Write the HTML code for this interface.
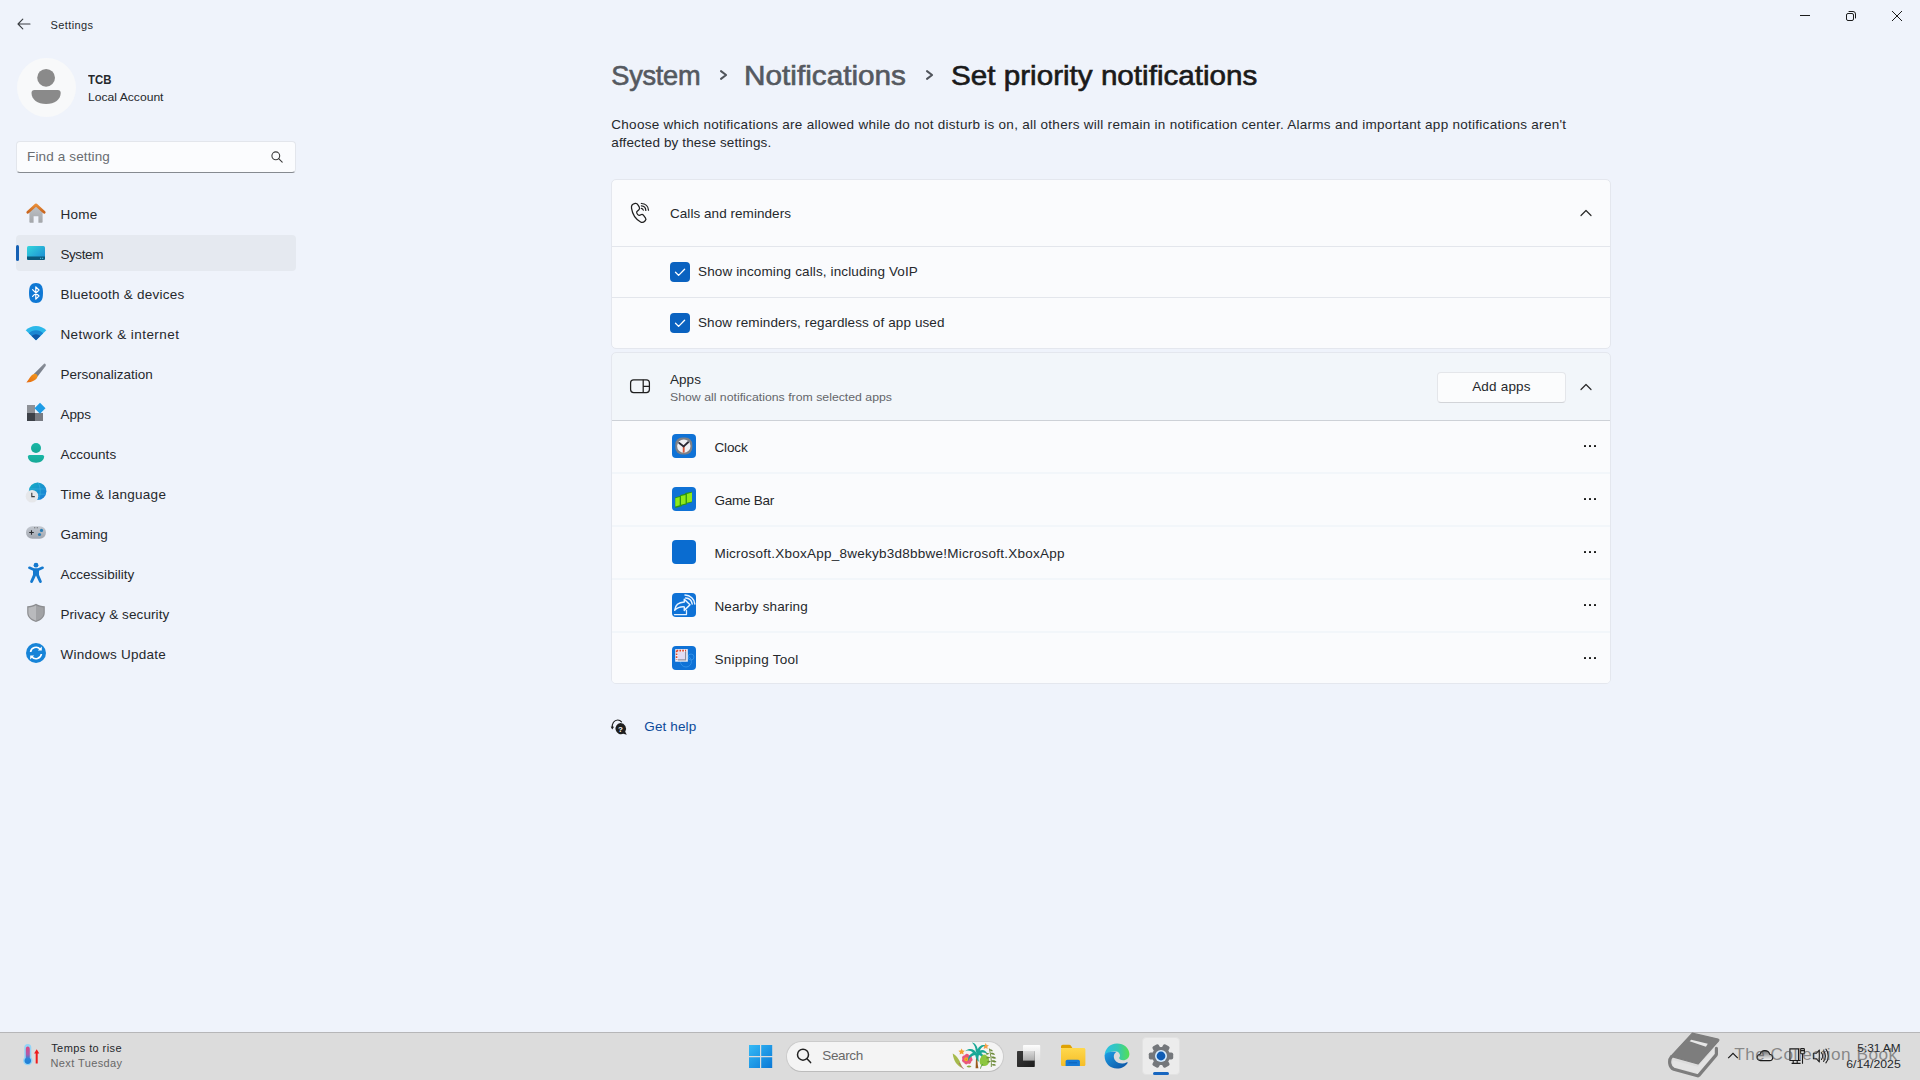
<!DOCTYPE html>
<html lang="en"><head><meta charset="utf-8"><title>Settings</title>
<style>
*{box-sizing:border-box;margin:0;padding:0}
html,body{width:1920px;height:1080px;overflow:hidden}
body{background:#eff3fb;font-family:"Liberation Sans",sans-serif;color:#1f2226;position:relative;font-size:14px}
.abs,svg{position:absolute}
.t{position:absolute;white-space:pre;line-height:1}
.card{position:absolute;left:611px;width:1000px;background:#fafbfd;border:1px solid #e4e7ee}
.row{position:absolute;left:612px;width:998px;height:51px;background:#fafbfd}
.dots{position:absolute;left:1582px;width:15px;height:3px}
.dots i{position:absolute;top:0;width:2.2px;height:2.2px;border-radius:.4px;background:#0a0a0a}
.aicon{position:absolute;left:672px;width:24px;height:24px;border-radius:4px;background:#0a6cce;overflow:hidden}
</style></head><body>
<!-- window chrome -->
<svg style="left:16px;top:16px" width="16" height="16" viewBox="0 0 16 16" fill="none" stroke="#3a3d42" stroke-width="1.1" stroke-linecap="round" stroke-linejoin="round"><path d="M14 8H2.2M6.8 3.2 2 8l4.8 4.8"/></svg>
<svg style="left:1799px;top:10px" width="12" height="12" viewBox="0 0 12 12" stroke="#1b1b1b" stroke-width="1" fill="none"><path d="M1 5.5h10"/></svg>
<svg style="left:1845px;top:10px" width="12" height="12" viewBox="0 0 12 12" stroke="#1b1b1b" stroke-width="1" fill="none"><rect x="1.5" y="3.5" width="7" height="7" rx="1.5"/><path d="M3.6 1.5H8a2.5 2.5 0 0 1 2.5 2.5v4.4"/></svg>
<svg style="left:1891px;top:10px" width="12" height="12" viewBox="0 0 12 12" stroke="#1b1b1b" stroke-width="1" fill="none"><path d="M1 1l10 10M11 1 1 11"/></svg>
<!-- avatar -->
<div class="abs" style="left:16.5px;top:58px;width:59px;height:59px;border-radius:50%;background:#f8f9fa"></div>
<svg style="left:16px;top:58px" width="60" height="60" viewBox="0 0 60 60"><circle cx="30.1" cy="19.8" r="8.9" fill="#8a8a8a"/><path d="M18.5 32h23.2a3 3 0 0 1 3 3c0 6.5-6 11-14.6 11S15.5 41.500 15.500 35a3 3 0 0 1 3-3z" fill="#8a8a8a"/></svg>
<!-- search box -->
<div class="abs" style="left:16px;top:141px;width:280px;height:32px;border-radius:4px;background:#fbfcfe;border:1px solid #e3e6ec;border-bottom:1.5px solid #868a90"></div>
<svg style="left:270px;top:150px" width="14" height="14" viewBox="0 0 14 14" fill="none" stroke="#3c3c3c" stroke-width="1.1" stroke-linecap="round"><circle cx="5.8" cy="5.8" r="3.9"/><path d="M8.7 8.7 12.2 12.200"/></svg>
<!-- selected nav -->
<div class="abs" style="left:16px;top:235px;width:280px;height:36px;border-radius:4px;background:#e5e9f0"></div>
<div class="abs" style="left:16px;top:245px;width:3px;height:16px;border-radius:1.5px;background:#1560b4"></div>
<!-- home -->
<svg style="left:25px;top:202px" width="22" height="22" viewBox="0 0 22 22"><defs><linearGradient id="hg" x1="0" y1="0" x2="0" y2="1"><stop offset="0" stop-color="#bfc2c6"/><stop offset="1" stop-color="#a3a6aa"/></linearGradient><linearGradient id="hr" x1="0" y1="0" x2="0" y2="1"><stop offset="0" stop-color="#e88d38"/><stop offset="1" stop-color="#c9651e"/></linearGradient></defs><path d="M4.400 9.600 11 4l6.600 5.600V20a.8.800 0 0 1-.8.800h-3.400v-6.600H8.600v6.600H5.200a.8.800 0 0 1-.8-.8z" fill="url(#hg)"/><path d="M2.800 10.200 11 2.900l8.200 7.300" fill="none" stroke="url(#hr)" stroke-width="2.800" stroke-linecap="round" stroke-linejoin="round"/></svg>
<!-- system -->
<svg style="left:26px;top:245px" width="20" height="16" viewBox="0 0 20 16"><defs><linearGradient id="sg" x1="0" y1="0" x2="1" y2="1"><stop offset="0" stop-color="#33d6dc"/><stop offset="1" stop-color="#1b86d2"/></linearGradient></defs><rect x="1" y="1" width="18" height="14" rx="1.600" fill="url(#sg)"/><path d="M1 11.400h18v2a1.600 1.600 0 0 1-1.600 1.600H2.600A1.600 1.600 0 0 1 1 13.400z" fill="#0b5a7c"/><rect x="14" y="12.800" width="1.200" height="1" fill="#4fc3e8"/><rect x="16" y="12.800" width="1.200" height="1" fill="#4fc3e8"/></svg>
<!-- bluetooth -->
<svg style="left:25px;top:282px" width="22" height="22" viewBox="0 0 22 22"><path d="M11 1c4.600 0 7 2.600 7 10s-2.400 10-7 10-7-2.600-7-10 2.400-10 7-10z" fill="#0f78d4"/><path d="M7.600 7.600 14 14l-3.200 3.200V4.800L14 8l-6.400 6.400" fill="none" stroke="#fff" stroke-width="1.200" stroke-linejoin="round" stroke-linecap="round"/></svg>
<!-- network -->
<svg style="left:25px;top:322px" width="22" height="22" viewBox="0 0 22 22"><path d="M11 18.200 0.700 8.300C3.300 5.600 7 4 11 4s7.700 1.600 10.300 4.300z" fill="#2cb8ea"/><path d="M11 18.200 3.800 11.300C5.700 9.400 8.200 8.200 11 8.200s5.300 1.200 7.200 3.100z" fill="#1a86d2"/><path d="M11 18.200 6.700 14.100c1.100-1.100 2.600-1.800 4.300-1.800s3.200.7 4.300 1.800z" fill="#1059a8"/></svg>
<!-- personalization -->
<svg style="left:25px;top:362px" width="22" height="22" viewBox="0 0 22 22"><defs><linearGradient id="pb" x1="1" y1="0" x2="0" y2="1"><stop offset="0" stop-color="#8a8f98"/><stop offset="1" stop-color="#6f7682"/></linearGradient><linearGradient id="po" x1="1" y1="0" x2="0" y2="1"><stop offset="0" stop-color="#f29a1f"/><stop offset="1" stop-color="#e56a10"/></linearGradient></defs><path d="M19.300 1.600a1.500 1.500 0 0 1 1.300 2.300L12.400 14.700 8.800 12z" fill="url(#pb)"/><path d="M8.800 12c2-1 4.400.8 3.600 2.900-1 2.600-4.200 5.200-11 5.500C3.500 18.500 4.800 13.800 8.800 12z" fill="url(#po)"/></svg>
<!-- apps -->
<svg style="left:25px;top:402px" width="22" height="22" viewBox="0 0 22 22"><rect x="2" y="3" width="8" height="8" fill="#8e9197"/><rect x="2" y="11" width="8" height="8" fill="#3d4148"/><rect x="10" y="11" width="8" height="8" fill="#787b82"/><path d="M15 0.800 20.500 6.300 15 11.800 9.500 6.300z" fill="#1d9ce6"/></svg>
<!-- accounts -->
<svg style="left:25px;top:442px" width="22" height="22" viewBox="0 0 22 22"><defs><linearGradient id="ag" x1="0" y1="0" x2="0" y2="1"><stop offset="0" stop-color="#19b7a6"/><stop offset="1" stop-color="#16a896"/></linearGradient></defs><circle cx="11" cy="6" r="5" fill="url(#ag)"/><path d="M4.500 13h13a1.600 1.600 0 0 1 1.600 1.600c0 3.600-3.200 6.200-8.100 6.200s-8.100-2.600-8.100-6.200A1.600 1.600 0 0 1 4.500 13z" fill="url(#ag)"/></svg>
<!-- time & language -->
<svg style="left:25px;top:482px" width="22" height="22" viewBox="0 0 22 22"><defs><linearGradient id="tg" x1="0" y1="0" x2="1" y2="1"><stop offset="0" stop-color="#16b0c4"/><stop offset="1" stop-color="#1b78d8"/></linearGradient></defs><circle cx="12.600" cy="9.300" r="8.800" fill="url(#tg)"/><path d="M12.600 .5c3.500 2.500 3.500 15 0 17.600M4 7h17.200M5 12.200h16" stroke="#4fc4ea" stroke-width=".6" fill="none" opacity=".7"/><circle cx="7" cy="14.200" r="6.300" fill="#e6e7ea"/><path d="M6.800 10.800v3.800h3" fill="none" stroke="#3a3a3c" stroke-width="1.100"/></svg>
<!-- gaming -->
<svg style="left:25px;top:522px" width="22" height="22" viewBox="0 0 22 22"><defs><linearGradient id="gg" x1="0" y1="0" x2="0" y2="1"><stop offset="0" stop-color="#c3c8d0"/><stop offset="1" stop-color="#a2a7b0"/></linearGradient></defs><rect x="1" y="4.300" width="20" height="12.400" rx="6.200" fill="url(#gg)"/><path d="M4.200 10.500h4.600M6.500 8.200v4.600" stroke="#2a2c30" stroke-width="1.100"/><circle cx="16.500" cy="8.400" r="1.600" fill="#2b7db4"/><circle cx="14.500" cy="12.500" r="1.600" fill="#2b7db4"/><circle cx="9.800" cy="5.700" r=".5" fill="#333"/><circle cx="12.200" cy="5.700" r=".5" fill="#333"/></svg>
<!-- accessibility -->
<svg style="left:25px;top:562px" width="22" height="22" viewBox="0 0 22 22"><circle cx="11" cy="3.200" r="2.400" fill="#1479cf"/><path d="M3.200 5.300c.3-.8 1-1 1.800-.7L9 6.200h4l4-1.600c.8-.3 1.500-.1 1.800.7.300.8-.1 1.400-.9 1.700L14 8.700v4.100l2.700 6.300c.3.800 0 1.500-.7 1.800-.8.300-1.500 0-1.800-.7L11 13.600l-3.200 6.600c-.3.700-1 1-1.800.7-.7-.3-1-1-.7-1.800L8 12.800V8.700L4.100 7c-.8-.3-1.200-.9-.9-1.700z" fill="#1479cf"/></svg>
<!-- privacy -->
<svg style="left:25px;top:602px" width="22" height="22" viewBox="0 0 22 22"><path d="M11 1.800c2.600 1.700 5.400 2.400 8.800 2.500v6.200c0 4.600-3.400 7.800-8.800 9.500-5.400-1.700-8.800-4.900-8.800-9.500V4.300C5.600 4.200 8.400 3.500 11 1.800z" fill="#8c8d90"/><path d="M11 3.200c2.300 1.400 4.700 2 7.600 2.200v5.100c0 3.900-2.900 6.700-7.600 8.200z" fill="#a1a2a5"/><path d="M11 3.200C8.700 4.600 6.300 5.200 3.400 5.400v5.100c0 3.900 2.900 6.700 7.600 8.200z" fill="#b9babd"/></svg>
<!-- windows update -->
<svg style="left:25px;top:642px" width="22" height="22" viewBox="0 0 22 22"><circle cx="11" cy="11" r="10" fill="#1784d8"/><path d="M5.600 10a5.500 5.500 0 0 1 9.600-2.800M16.400 12a5.500 5.500 0 0 1-9.600 2.800" fill="none" stroke="#fff" stroke-width="1.700"/><path d="M16.800 4.600v4h-4zM5.200 17.400v-4h4z" fill="#fff"/></svg>


<!-- breadcrumb chevrons -->
<svg style="left:717px;top:67px" width="14" height="16" viewBox="0 0 14 16" fill="none" stroke="#50545b" stroke-width="2" stroke-linecap="round" stroke-linejoin="round"><path d="M4 4.100 9.100 8 4 11.900"/></svg>
<svg style="left:923px;top:67px" width="14" height="16" viewBox="0 0 14 16" fill="none" stroke="#50545b" stroke-width="2" stroke-linecap="round" stroke-linejoin="round"><path d="M4 4.100 9.100 8 4 11.900"/></svg>
<!-- card 1 -->
<div class="card" style="top:179px;height:170px;border-radius:5px"></div>
<div class="abs" style="left:612px;top:246px;width:998px;height:1px;background:#e3e6ec"></div>
<div class="abs" style="left:612px;top:297px;width:998px;height:1px;background:#e3e6ec"></div>
<!-- card 2 -->
<div class="card" style="top:352px;height:332px;border-radius:5px;background:#f2f6fa"></div>
<div class="abs" style="left:612px;top:420px;width:998px;height:1px;background:#cdd1d7"></div>
<div class="row" style="top:421px"></div>
<div class="row" style="top:474px"></div>
<div class="row" style="top:527px"></div>
<div class="row" style="top:580px"></div>
<div class="row" style="top:633px;height:50px;border-radius:0 0 4px 4px"></div>
<!-- checkboxes -->
<div class="abs" style="left:670px;top:262px;width:20px;height:20px;border-radius:4px;background:#0a62c0"></div>
<svg style="left:670px;top:262px" width="20" height="20" viewBox="0 0 20 20" fill="none" stroke="#fff" stroke-width="1.3" stroke-linecap="round" stroke-linejoin="round"><path d="M5.500 10.300 8.600 13.400 14.600 7.200"/></svg>
<div class="abs" style="left:670px;top:313px;width:20px;height:20px;border-radius:4px;background:#0a62c0"></div>
<svg style="left:670px;top:313px" width="20" height="20" viewBox="0 0 20 20" fill="none" stroke="#fff" stroke-width="1.3" stroke-linecap="round" stroke-linejoin="round"><path d="M5.500 10.300 8.600 13.400 14.600 7.200"/></svg>
<!-- header chevrons -->
<svg style="left:1579px;top:207px" width="14" height="12" viewBox="0 0 14 12" fill="none" stroke="#2a2a2a" stroke-width="1.2" stroke-linecap="round" stroke-linejoin="round"><path d="M2 8.500 7 3.500 12 8.500"/></svg>
<svg style="left:1579px;top:381px" width="14" height="12" viewBox="0 0 14 12" fill="none" stroke="#2a2a2a" stroke-width="1.2" stroke-linecap="round" stroke-linejoin="round"><path d="M2 8.500 7 3.500 12 8.500"/></svg>
<!-- add apps button -->
<div class="abs" style="left:1437px;top:372px;width:129px;height:31px;border-radius:4px;background:#fbfcfd;border:1px solid #e4e6ea;border-bottom-color:#d2d4d8"></div>
<!-- dots -->
<div class="dots" style="top:445px"><i style="left:1.900px"></i><i style="left:6.900px"></i><i style="left:11.900px"></i></div>
<div class="dots" style="top:498px"><i style="left:1.900px"></i><i style="left:6.900px"></i><i style="left:11.900px"></i></div>
<div class="dots" style="top:551px"><i style="left:1.900px"></i><i style="left:6.900px"></i><i style="left:11.900px"></i></div>
<div class="dots" style="top:604px"><i style="left:1.900px"></i><i style="left:6.900px"></i><i style="left:11.900px"></i></div>
<div class="dots" style="top:657px"><i style="left:1.900px"></i><i style="left:6.900px"></i><i style="left:11.900px"></i></div>
<!-- calls icon -->
<svg style="left:620px;top:195px" width="40" height="40" viewBox="0 0 40 40" fill="none" stroke="#1f1f1f" stroke-width="1.250" stroke-linecap="round" stroke-linejoin="round"><path d="M15.200 8.400c1.300-.2 2.200.5 2.900 1.700l1.200 2c.6 1.100.3 2.100-.6 2.900l-1.500 1.300c-.6.500-.7 1-.4 1.800.5 1.300 1.100 2 2.200 2.200.6.100 1.200-.1 1.900-.5.900-.5 1.800-.4 2.500.4l2 2.600c.8 1 .7 2-.200 2.900-1.500 1.600-3 2.200-4.600 1.300-4.900-2.800-8.200-7.800-9.100-13.900-.3-2.300 1.200-4.300 3.700-4.700z"/><path d="M21.400 8.500c4 .2 6.900 2.900 7.100 6.700M21.400 10.900c2.600.2 4.300 1.900 4.400 4.500M21.400 13.400c1 .2 1.600.8 1.900 1.700"/></svg>
<!-- apps header icon -->
<svg style="left:620px;top:367px" width="40" height="40" viewBox="0 0 40 40" fill="none" stroke="#1f1f1f" stroke-width="1.250"><rect x="10.600" y="12.800" width="18.800" height="12.700" rx="3"/><path d="M23.200 12.800v12.700M23.200 19.300h6.200"/></svg>
<!-- clock -->
<div class="aicon" style="top:434px;background:#0f72d6"><svg width="24" height="24" viewBox="0 0 24 24"><rect x="3.300" y="3.600" width="17" height="17" rx="6.800" fill="#7d8087"/><circle cx="11.800" cy="12.100" r="6.700" fill="#f0f0f3"/><path d="M11.700 12.400v5.400" stroke="#d9573a" stroke-width="1.900" stroke-linecap="round"/><path d="M7.200 8.900l4.500 3.500 4.400-4.200" fill="none" stroke="#2c2a35" stroke-width="1.900" stroke-linecap="round" stroke-linejoin="round"/></svg></div>
<!-- game bar -->
<div class="aicon" style="top:487px;background:#0f72d6"><svg width="24" height="24" viewBox="0 0 24 24"><path d="M3.300 10.200 8.200 8.900V8l5-1.300V5.900L20 4.700v10.500l-5.300 1.400v.8l-4.900 1.200v.7l-6.500 1.600z" fill="#2c9413"/><path d="M3.300 11.300 7.700 10.100v8.200l-4.400 1.200zM9 9.100l4.600-1.200v8.600L9 17.700zM14.900 6.900l5.100-1.300v8.800l-5.100 1.300z" fill="#8fe91a"/></svg></div>
<!-- xbox placeholder -->
<div class="aicon" style="top:540px;background:#0a6cd0"></div>
<!-- nearby sharing -->
<div class="aicon" style="top:593px;background:#0f72d6"><svg width="24" height="24" viewBox="0 0 24 24" fill="none" stroke="#e6f2ff" stroke-width="1.500" stroke-linejoin="round" stroke-linecap="round"><path d="M12.300 6.200l5.700 5.600-5.700 5.600v-3.500c-4-.3-7 .8-9.600 3.300.5-5 3.800-7.900 9.600-8.200z"/><path d="M2.500 21.600h12V17.300" stroke-width="1.300"/><path d="M13 2.100c5.300.2 9.500 3.900 9.800 8.900M13.600 5c3.700.3 6.200 2.600 6.600 6"/></svg></div>
<!-- snipping tool -->
<div class="aicon" style="top:646px;background:#0f72d6"><svg width="24" height="24" viewBox="0 0 24 24"><circle cx="14" cy="15.500" r="5.500" fill="none" stroke="#2f8fe6" stroke-width="1"/><circle cx="19" cy="11" r="3" fill="none" stroke="#2f8fe6" stroke-width="1"/><rect x="3.200" y="3.100" width="12.600" height="12.600" fill="#f4f1f7"/><rect x="6" y="6" width="7.500" height="7.500" fill="#e3dcf3"/><path d="M4.600 4.600h9.500M4.600 4.600v9" stroke="#e0452a" stroke-width="1.600" stroke-dasharray="1.700 1.100" fill="none"/><path d="M13.600 5.500v8.300H5.800" stroke="#8d8fa0" stroke-width="1.200" fill="none"/></svg></div>
<!-- get help icon -->
<svg style="left:608px;top:716px" width="24" height="24" viewBox="0 0 24 24"><path d="M4.400 11.600C3.700 7.500 6.200 4 9.700 4c1.600 0 2.900.7 3.800 1.800" fill="none" stroke="#1f1f1f" stroke-width="1.200" stroke-linecap="round"/><path d="M2.700 10.500l3.400.3-1.900 2.700z" fill="#1f1f1f"/><path d="M12.400 7.100a5.600 5.600 0 0 1 4.800 8.600l1.600 3.100-3.500-1A5.600 5.600 0 1 1 12.400 7.100z" fill="#1f1f1f"/><text x="12.400" y="15.600" text-anchor="middle" font-family="Liberation Sans, sans-serif" font-size="8" font-weight="700" fill="#fff">?</text></svg>


<div class="abs" style="left:0;top:1032px;width:1920px;height:48px;background:#dcdcdc;border-top:1px solid #b6b6b8"></div>
<!-- search pill -->
<div class="abs" style="left:785.500px;top:1040.500px;width:218.500px;height:31px;border-radius:15.500px;background:#f4f4f4;border:1px solid #cbcbcb;border-bottom-color:#bcbcbc"></div>
<!-- settings active bg -->
<div class="abs" style="left:1142px;top:1037px;width:38px;height:38px;border-radius:4px;background:#ececec;border:1px solid #e2e2e2"></div>
<div class="abs" style="left:1153px;top:1072px;width:16px;height:3px;border-radius:1.5px;background:#1766c0"></div>
<!-- weather thermometer -->
<svg style="left:20px;top:1042px" width="24" height="26" viewBox="0 0 24 26"><defs><linearGradient id="th" x1="0" y1="0" x2="0" y2="1"><stop offset="0" stop-color="#e0457c"/><stop offset=".45" stop-color="#b05aa8"/><stop offset=".7" stop-color="#2a86d8"/><stop offset="1" stop-color="#1e7fd6"/></linearGradient></defs><path d="M7.800 2a3.500 3.500 0 0 1 3.500 3.500v9.900a4.700 4.700 0 1 1-7 0V5.500A3.500 3.500 0 0 1 7.800 2z" fill="#93d4f7"/><path d="M7.800 4.400c1.300 0 2 1.300 2 2.800v8.900a3.300 3.300 0 1 1-4 0V7.200c0-1.500.7-2.800 2-2.800z" fill="url(#th)"/><path d="M16.700 7.200 19.300 11.500h-1.600V21.500h-2V11.500h-1.600z" fill="#ee1c1c"/></svg>
<!-- start -->
<svg style="left:748px;top:1044px" width="26" height="26" viewBox="0 0 26 26"><defs><linearGradient id="wl" x1="0" y1="0" x2="1" y2="1"><stop offset="0" stop-color="#35baf6"/><stop offset="1" stop-color="#0a78d6"/></linearGradient></defs><path d="M1 1.100h11v11H1zM13.200 1.100h11v11h-11zM1 13.300h11v10.700H1zM13.200 13.300h11v10.700h-11z" fill="url(#wl)"/></svg>
<!-- search glass -->
<svg style="left:794px;top:1046px" width="20" height="20" viewBox="0 0 20 20" fill="none" stroke="#222" stroke-width="1.500" stroke-linecap="round"><circle cx="9" cy="8.700" r="5.500"/><path d="M13 12.800 16.600 16.600"/></svg>
<!-- floral -->
<svg style="left:950px;top:1042px" width="52" height="28" viewBox="0 0 52 28">
<path d="M2.700 11.500c4.500 2.500 7.500 7 9.300 14.500-5-2.500-8.500-7-9.300-14.500z" fill="#a6ba4c"/><path d="M9 21l4.500 6" stroke="#b0566a" stroke-width=".8"/>
<path d="M11.600 6.500l1 2 2.200.3-1.600 1.500.4 2.200-2-1-2 1 .4-2.200-1.600-1.500 2.200-.3z" fill="#f0a22e"/>
<path d="M35.700 1l1 2 2.200.3-1.600 1.500.4 2.200-2-1-2 1 .4-2.200-1.600-1.500 2.200-.3z" fill="#f4a04a"/>
<path d="M15.800 12.200c1.500-1 3 .2 3.200 1.300 1.500-.6 3.300.5 2.800 2.400 1.300 1 1 3-.6 3.700.2 1.800-1.600 2.900-3.200 2-1.200 1.400-3.300.8-3.800-.9-1.800-.2-2.800-2.100-1.800-3.700-1-1.600.2-3.600 1.900-3.500.3-.5.900-1 1.500-1.300z" fill="#e9577c"/><circle cx="16.200" cy="17.300" r="2" fill="#f2b022"/><circle cx="16.200" cy="17.300" r=".8" fill="#e08a1a"/>
<path d="M16.500 24.500c1.500-1.500 3.500-1.500 5 0-1.500 1.300-3.500 1.300-5 0z" fill="#8ea83e"/>
<path d="M25.600 26.300c.3-5 .2-9.500.7-13.800l1.600.4c-.8 4.300-.4 8.900.5 13.400z" fill="#9a5a1c"/>
<path transform="translate(27 11.500) scale(1.150 1.450) translate(-27 -12.500)" d="M26.800 12.500c-1.500-2.500-5.500-4.600-10.300-1.600 2.700-.9 5.300-.3 7 1.200-2.500.4-4.600 2.700-4.400 6 1.200-2.600 3.600-4.400 6.400-4.400.4 1.800 1.400 3.700 3.200 4.500-.6-1.700-.6-3.300 0-4.600 2 .5 3.800 2.200 4.300 4.600.8-2.700-.3-5-2.300-6.100 1.900-.5 4-.1 5.700 1.400-1.100-2.900-4.300-4.100-7-3 1-1.900 2.800-3.200 4.800-3.600-2.500-.9-5.400.3-6.600 2.700-.5-2.300-2.400-4.400-5-4.600 1.900 1.300 3.300 3.600 3.300 5.800z" fill="#1ba896"/>
<path d="M34 12.500c3.600.6 5.700 3.800 5 7.800-.4 2.500-2.600 4-5.400 3.800-2.700-.2-4.300-2.600-3.900-5.600.4-2.900 2.100-5.400 4.300-6z" fill="#8cc63f"/><path d="M33 22c-1.400 1.300-2.200 2.800-2.500 4.600" stroke="#5b9a4a" stroke-width="1" fill="none"/>
<path d="M41.300 25c.5-6-.5-12-2-18.500" stroke="#6d8b3a" stroke-width=".9" fill="none"/>
<path d="M39.500 7.500c1.400-.5 2.800.2 3.400 1.700-1.500.4-2.800-.3-3.400-1.700zM40.300 11c1.800-.8 3.800-.2 4.800 1.400-1.900.7-3.800.1-4.800-1.400zM40.900 14.800c2-.9 4.200-.3 5.400 1.500-2.100.8-4.200.2-5.400-1.500zM41.300 18.700c2-.9 4.100-.4 5.300 1.300-2 .8-4.100.3-5.300-1.300zM41.400 22.500c1.700-.9 3.600-.6 4.800.8-1.700.8-3.600.5-4.800-.8zM39.400 11.500c-1.300-.9-2.900-.8-3.900.4 1.400.8 2.900.7 3.900-.4zM40.300 15.500c-1.400-1-3.200-.9-4.300.5 1.500.9 3.200.7 4.300-.5zM40.900 19.500c-1.300-1-3-.9-4 .4 1.400.9 3 .7 4-.4z" fill="#6d8b3a"/>
</svg>
<!-- task view -->
<svg style="left:1016px;top:1044px" width="26" height="24" viewBox="0 0 26 24"><defs><linearGradient id="tv1" x1="0" y1="0" x2="0" y2="1"><stop offset="0" stop-color="#fdfdfd"/><stop offset="1" stop-color="#e3e3e3" stop-opacity=".6"/></linearGradient><linearGradient id="tv2" x1="0" y1="0" x2="0" y2="1"><stop offset="0" stop-color="#d9d9d9"/><stop offset="1" stop-color="#ababab"/></linearGradient><linearGradient id="tv3" x1="0" y1="0" x2="1" y2="1"><stop offset="0" stop-color="#3a3a3a"/><stop offset="1" stop-color="#1d1d1d"/></linearGradient></defs><rect x="7" y="1" width="17.200" height="15.600" rx=".8" fill="url(#tv1)"/><rect x="1" y="7" width="17.800" height="16" rx=".8" fill="url(#tv3)"/><rect x="7" y="7" width="11.800" height="9.600" fill="url(#tv2)"/></svg>
<!-- explorer -->
<svg style="left:1060px;top:1044px" width="26" height="24" viewBox="0 0 26 24"><defs><linearGradient id="ex" x1="0" y1="0" x2="0" y2="1"><stop offset="0" stop-color="#ffd84d"/><stop offset="1" stop-color="#f6bd27"/></linearGradient></defs><path d="M1 2.600A1.800 1.800 0 0 1 2.800.8h6.400c.7 0 1.200.3 1.600.8l1.600 2.300H1z" fill="#dfa204"/><path d="M1 5.200c0-.8.600-1.300 1.400-1.300h21.400c.9 0 1.600.7 1.600 1.600v15c0 .9-.7 1.600-1.600 1.600H2.600c-.9 0-1.600-.7-1.600-1.600z" fill="url(#ex)"/><path d="M5.600 22.100v-4.600c0-1 .8-1.800 1.800-1.800h10.700c1 0 1.800.8 1.800 1.800v4.600z" fill="#1579d6"/><path d="M8.500 18.800h8.500" stroke="#0e62b8" stroke-width="1"/></svg>
<!-- edge -->
<svg style="left:1104px;top:1043px" width="26" height="26" viewBox="0 0 26 26"><defs><linearGradient id="e1" x1="0" y1="0" x2="1" y2="0"><stop offset="0" stop-color="#2bbfe8"/><stop offset=".55" stop-color="#35c9b4"/><stop offset="1" stop-color="#55e050"/></linearGradient><linearGradient id="e2" x1="0" y1="0" x2="1" y2="1"><stop offset="0" stop-color="#1ea0e6"/><stop offset="1" stop-color="#0b4fa0"/></linearGradient></defs><path d="M.6 13C.6 5.800 6 .5 13 .5c7 0 12.400 4.700 12.400 10.500 0 3.800-2.800 6.300-6.200 6.300-2.600 0-4-1.100-4-2.200 0-.8.800-1.200.8-2.600 0-2.300-2-4.300-5-4.300C5.800 8.200 2 11.500.6 13z" fill="url(#e1)"/><path d="M.6 13c0 7 5.400 12.500 12.400 12.500 4.700 0 8.500-2.300 10.600-5.600.3-.5-.2-.9-.7-.6-1.400.8-3 1.200-4.700 1.200-5 0-8.400-3.300-8.400-7 0-2 1.100-3.700 2.700-4.700C6.300 8.300 1.500 9 .6 13z" fill="url(#e2)"/></svg>
<!-- settings gear -->
<svg style="left:1148px;top:1043px" width="26" height="26" viewBox="0 0 26 26"><g transform="translate(13 13)"><g fill="#74777b" transform="rotate(30)"><circle r="9"/><rect x="-3.600" y="-12.200" width="7.200" height="7" rx="1.800"/><rect x="-3.600" y="-12.200" width="7.200" height="7" rx="1.800" transform="rotate(60)"/><rect x="-3.600" y="-12.200" width="7.200" height="7" rx="1.800" transform="rotate(120)"/><rect x="-3.600" y="-12.200" width="7.200" height="7" rx="1.800" transform="rotate(180)"/><rect x="-3.600" y="-12.200" width="7.200" height="7" rx="1.800" transform="rotate(240)"/><rect x="-3.600" y="-12.200" width="7.200" height="7" rx="1.800" transform="rotate(300)"/></g><circle r="6" fill="#d4ebff"/><circle r="4.400" fill="#0f5cb4"/></g></svg>
<!-- watermark book -->
<svg style="left:1660px;top:1030px;opacity:.92" width="64" height="50" viewBox="0 0 64 50"><path d="M32.300 3.200 58 9.100c.9.200 1.200 1 .6 1.800L38 34 10.800 26.300z" fill="#757575" stroke="#757575" stroke-width="1.200" stroke-linejoin="round"/><path d="M13.500 30.200 37.800 36.800 55 17.300v6.200L37.800 43.500 14.800 37.400c-2.600-.8-3.400-5-1.300-7.200z" fill="#e4e4e4"/><path d="M11.400 26.800c-2.800 3.200-2.400 10.400 2.400 12.400l23.800 6.600c.5.100.9 0 1.200-.4l17.200-20.300c.3-.4.400-.7.400-1.200v-5.500" fill="none" stroke="#757575" stroke-width="3.200" stroke-linecap="round" stroke-linejoin="round"/><path d="M29.600 11.300l1.700-1.600 16.500 4-1.900 3z" fill="#e9e9e9"/></svg>
<!-- tray chevron -->
<svg style="left:1726px;top:1049px" width="14" height="12" viewBox="0 0 14 12" fill="none" stroke="#1b1b1b" stroke-width="1.200"><path d="M2.200 9.200 7 4.400l4.800 4.800"/></svg>
<!-- cloud -->
<svg style="left:1755px;top:1047px" width="20" height="16" viewBox="0 0 20 16"><defs><linearGradient id="cl" x1="0" y1="0" x2="0" y2="1"><stop offset="0" stop-color="#6e6e6e"/><stop offset=".6" stop-color="#c8c8c8"/><stop offset="1" stop-color="#f6f6f6"/></linearGradient></defs><path d="M5.400 13.600c-2 0-3.300-1.400-3.300-3.100 0-1.700 1.300-3 2.900-3.200C5.700 5 7.600 3.600 9.800 3.600c2.400 0 4.300 1.500 4.900 3.700 1.700.2 3 1.500 3 3.200 0 1.800-1.400 3.100-3.200 3.100z" fill="url(#cl)" stroke="#1b1b1b" stroke-width="1.100" stroke-linejoin="round"/></svg>
<!-- network monitor -->
<svg style="left:1788px;top:1046px" width="18" height="20" viewBox="0 0 18 20" fill="none" stroke="#1b1b1b" stroke-width="1.100"><path d="M1.900 14.500V2.900h8.600v11.600M1.400 14.500h11.200"/><path d="M5.200 14.500v2.800M9.200 14.500v2.800M3.600 17.400h9"/><rect x="12.600" y="2.600" width="3.800" height="5.200" rx=".8"/><path d="M12.600 4.600h3.800M14.500 7.800v10"/></svg>
<!-- speaker -->
<svg style="left:1811px;top:1046px" width="20" height="20" viewBox="0 0 20 20" fill="none" stroke="#1b1b1b" stroke-width="1.100" stroke-linejoin="round" stroke-linecap="round"><path d="M2.400 7.300h2.900L8.300 4v12l-3-3.300H2.400z"/><path d="M10.400 6.600c1.500 1.900 1.500 5 0 6.900M12.600 4.800c2.400 2.900 2.400 7.600 0 10.500M14.900 3.200c3.200 3.800 3.200 9.900 0 13.700"/></svg>


<div class="t" style="left:50.50px;top:19.69px;font-size:11px;color:#25282c;letter-spacing:0.406px;">Settings</div>
<div class="t" style="left:88.30px;top:72.97px;font-size:13.5px;color:#25282c;font-weight:700;transform:scaleX(0.8432);transform-origin:0 50%;">TCB</div>
<div class="t" style="left:88.30px;top:92.49px;font-size:11px;color:#25282c;transform:scaleX(1.1022);transform-origin:0 50%;">Local Account</div>
<div class="t" style="left:27.00px;top:149.87px;font-size:13.5px;color:#696c71;letter-spacing:0.140px;">Find a setting</div>
<div class="t" style="left:60.40px;top:207.57px;font-size:13.5px;color:#25282c;letter-spacing:0.246px;">Home</div>
<div class="t" style="left:60.40px;top:247.57px;font-size:13.5px;color:#25282c;letter-spacing:-0.403px;">System</div>
<div class="t" style="left:60.40px;top:287.57px;font-size:13.5px;color:#25282c;letter-spacing:0.246px;">Bluetooth &amp; devices</div>
<div class="t" style="left:60.40px;top:327.57px;font-size:13.5px;color:#25282c;letter-spacing:0.442px;">Network &amp; internet</div>
<div class="t" style="left:60.40px;top:367.57px;font-size:13.5px;color:#25282c;letter-spacing:0.013px;">Personalization</div>
<div class="t" style="left:60.40px;top:407.57px;font-size:13.5px;color:#25282c;letter-spacing:-0.020px;">Apps</div>
<div class="t" style="left:60.40px;top:447.57px;font-size:13.5px;color:#25282c;letter-spacing:0.034px;">Accounts</div>
<div class="t" style="left:60.40px;top:487.57px;font-size:13.5px;color:#25282c;letter-spacing:0.282px;">Time &amp; language</div>
<div class="t" style="left:60.40px;top:527.57px;font-size:13.5px;color:#25282c;letter-spacing:0.020px;">Gaming</div>
<div class="t" style="left:60.40px;top:567.57px;font-size:13.5px;color:#25282c;letter-spacing:0.036px;">Accessibility</div>
<div class="t" style="left:60.40px;top:607.57px;font-size:13.5px;color:#25282c;letter-spacing:0.095px;">Privacy &amp; security</div>
<div class="t" style="left:60.40px;top:647.57px;font-size:13.5px;color:#25282c;letter-spacing:0.253px;">Windows Update</div>
<div class="t" style="left:611.30px;top:61.98px;font-size:27.2px;color:#555960;letter-spacing:-0.276px;-webkit-text-stroke:0.62px currentColor;">System</div>
<div class="t" style="left:743.60px;top:61.98px;font-size:27.2px;color:#555960;transform:scaleX(1.0939);transform-origin:0 50%;-webkit-text-stroke:0.62px currentColor;">Notifications</div>
<div class="t" style="left:950.60px;top:61.98px;font-size:27.2px;color:#1a1a1a;transform:scaleX(1.0901);transform-origin:0 50%;-webkit-text-stroke:0.62px currentColor;">Set priority notifications</div>
<div class="t" style="left:611.30px;top:117.57px;font-size:13.5px;color:#25282c;letter-spacing:0.275px;">Choose which notifications are allowed while do not disturb is on, all others will remain in notification center. Alarms and important app notifications aren&#x27;t</div>
<div class="t" style="left:611.30px;top:135.57px;font-size:13.5px;color:#25282c;letter-spacing:0.126px;">affected by these settings.</div>
<div class="t" style="left:670.00px;top:206.57px;font-size:13.5px;color:#25282c;letter-spacing:0.049px;">Calls and reminders</div>
<div class="t" style="left:698.00px;top:264.77px;font-size:13.5px;color:#25282c;letter-spacing:0.132px;">Show incoming calls, including VoIP</div>
<div class="t" style="left:698.00px;top:315.77px;font-size:13.5px;color:#25282c;letter-spacing:0.111px;">Show reminders, regardless of app used</div>
<div class="t" style="left:670.00px;top:372.57px;font-size:13.5px;color:#25282c;letter-spacing:0.055px;">Apps</div>
<div class="t" style="left:670.00px;top:391.69px;font-size:11px;color:#65676b;transform:scaleX(1.1172);transform-origin:0 50%;">Show all notifications from selected apps</div>
<div class="t" style="left:1472.20px;top:380.17px;font-size:13.5px;color:#25282c;letter-spacing:0.182px;">Add apps</div>
<div class="t" style="left:714.40px;top:440.57px;font-size:13.5px;color:#25282c;letter-spacing:-0.093px;">Clock</div>
<div class="t" style="left:714.40px;top:493.57px;font-size:13.5px;color:#25282c;letter-spacing:-0.241px;">Game Bar</div>
<div class="t" style="left:714.40px;top:546.57px;font-size:13.5px;color:#25282c;letter-spacing:0.244px;">Microsoft.XboxApp_8wekyb3d8bbwe!Microsoft.XboxApp</div>
<div class="t" style="left:714.40px;top:599.57px;font-size:13.5px;color:#25282c;letter-spacing:0.140px;">Nearby sharing</div>
<div class="t" style="left:714.40px;top:652.57px;font-size:13.5px;color:#25282c;letter-spacing:0.244px;">Snipping Tool</div>
<div class="t" style="left:644.30px;top:719.87px;font-size:13.5px;color:#0c4a9a;letter-spacing:0.119px;">Get help</div>
<div class="t" style="left:51.20px;top:1042.69px;font-size:11px;color:#25282c;letter-spacing:0.414px;">Temps to rise</div>
<div class="t" style="left:50.50px;top:1058.19px;font-size:11px;color:#686868;letter-spacing:0.395px;">Next Tuesday</div>
<div class="t" style="left:822.30px;top:1049.47px;font-size:13.5px;color:#686868;letter-spacing:-0.380px;">Search</div>
<div class="t" style="right:19.60px;top:1042.61px;font-size:10.5px;color:#25282c;transform:scaleX(1.1212);transform-origin:100% 50%;">5:31 AM</div>
<div class="t" style="right:19.60px;top:1058.71px;font-size:10.5px;color:#25282c;transform:scaleX(1.1644);transform-origin:100% 50%;">6/14/2025</div>
<div class="t" style="left:1734.20px;top:1046.04px;font-size:17.2px;color:rgba(80,80,80,0.62);letter-spacing:0.509px;">The Collection Book</div>
</body></html>
